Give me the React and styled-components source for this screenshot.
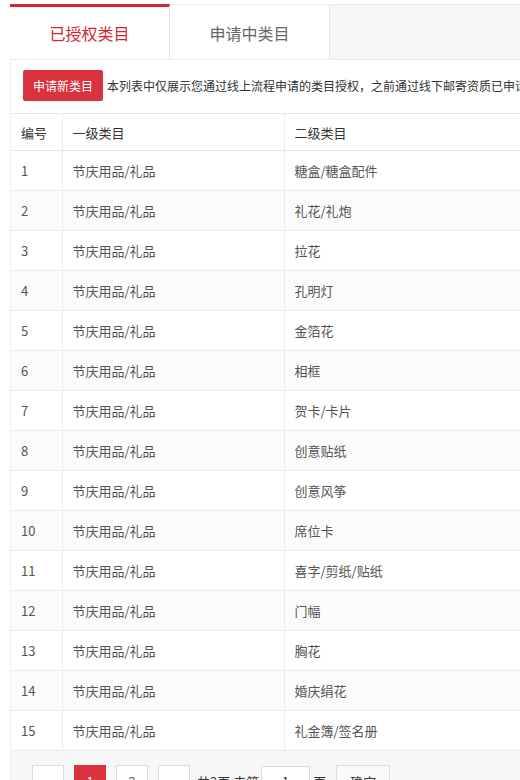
import React from "react";
import styled, { createGlobalStyle } from "styled-components";

const GlobalStyle = createGlobalStyle`
  html, body {
    margin: 0;
    padding: 0;
    background: #fff;
    overflow: hidden;
  }
  body {
    font-family: "Noto Sans CJK SC", "Noto Sans", sans-serif;
    color: #555;
  }
`;

const Page = styled.div`
  width: 760px;
  padding: 4px 0 0 10px;
`;

const TabBar = styled.div`
  display: flex;
  height: 56px;
  background: #f7f7f7;
  border-top: 1px solid #ececec;
  border-bottom: 1px solid #ececec;
  box-sizing: border-box;
`;

const Tab = styled.div`
  width: 160px;
  display: flex;
  align-items: center;
  justify-content: center;
  background: #fff;
  font-size: 16px;
  box-sizing: border-box;
  margin-top: ${(p) => (p.$active ? "-1px" : "0")};
  color: ${(p) => (p.$active ? "#d4262e" : "#666")};
  border-top: ${(p) => (p.$active ? "3px solid #d4262e" : "none")};
  border-right: 1px solid #e6e6e6;
  padding-top: ${(p) => (p.$active ? "0" : "2px")};
`;

const Panel = styled.div`
  border-left: 1px solid #eeeeee;
`;

const Toolbar = styled.div`
  display: flex;
  align-items: center;
  gap: 4px;
  padding: 10px 12px 12px;
  white-space: nowrap;
`;

const RedButton = styled.button`
  height: 31px;
  padding: 0 10px;
  border: none;
  border-radius: 2px;
  background: #d9333f;
  color: #fff;
  font-family: inherit;
  font-size: 12px;
`;

const Note = styled.span`
  font-size: 12px;
  color: #333;
`;

const Table = styled.table`
  border-collapse: collapse;
  width: 740px;
  font-size: 13px;
  table-layout: fixed;
`;

const Th = styled.th`
  height: 36px;
  text-align: left;
  font-weight: normal;
  color: #333;
  padding: 0 10px;
  border-top: 1px solid #e8e8e8;
  border-bottom: 1px solid #e8e8e8;
  & + & {
    border-left: 1px solid #ececec;
  }
`;

const Row = styled.tr`
  background: ${(p) => (p.$even ? "#fbfbfb" : "#fff")};
`;

const Td = styled.td`
  height: 39px;
  padding: 0 10px;
  color: #555;
  border-bottom: 1px solid #ececec;
  & + & {
    border-left: 1px solid #ececec;
  }
`;

const Pager = styled.div`
  display: flex;
  align-items: center;
  background: #f7f7f7;
  padding: 14px 21px 20px;
  font-size: 13px;
  color: #333;
`;

const PageBtn = styled.div`
  width: 32px;
  height: 32px;
  box-sizing: border-box;
  display: flex;
  align-items: center;
  justify-content: center;
  margin-right: 10px;
  border: 1px solid ${(p) => (p.$active ? "#d9333f" : "#dcdcdc")};
  background: ${(p) => (p.$active ? "#d9333f" : "#fff")};
  color: ${(p) => (p.$active ? "#fff" : p.$disabled ? "#bbb" : "#555")};
  font-size: 13px;
  &:nth-child(4) {
    margin-right: 7px;
  }
`;

const PagerText = styled.span`
  margin-right: 2px;
`;

const PageInput = styled.div`
  width: 49px;
  height: 30px;
  box-sizing: border-box;
  border: 1px solid #dcdcdc;
  background: #fff;
  display: flex;
  align-items: center;
  justify-content: center;
  margin-right: 3px;
`;

const ConfirmBtn = styled.div`
  width: 54px;
  height: 32px;
  box-sizing: border-box;
  margin-left: 10px;
  border: 1px solid #dcdcdc;
  background: #fafafa;
  display: flex;
  align-items: center;
  justify-content: center;
`;

const rows = [
  "糖盒/糖盒配件",
  "礼花/礼炮",
  "拉花",
  "孔明灯",
  "金箔花",
  "相框",
  "贺卡/卡片",
  "创意贴纸",
  "创意风筝",
  "席位卡",
  "喜字/剪纸/贴纸",
  "门幅",
  "胸花",
  "婚庆绢花",
  "礼金簿/签名册",
];

export default function App() {
  return (
    <>
      <GlobalStyle />
      <Page>
        <TabBar>
          <Tab $active>已授权类目</Tab>
          <Tab>申请中类目</Tab>
        </TabBar>
        <Panel>
          <Toolbar>
            <RedButton>申请新类目</RedButton>
            <Note>
              本列表中仅展示您通过线上流程申请的类目授权，之前通过线下邮寄资质已申请的类目不在此展示
            </Note>
          </Toolbar>
          <Table>
            <colgroup>
              <col style={{ width: 51 }} />
              <col style={{ width: 222 }} />
              <col />
            </colgroup>
            <thead>
              <tr>
                <Th>编号</Th>
                <Th>一级类目</Th>
                <Th>二级类目</Th>
              </tr>
            </thead>
            <tbody>
              {rows.map((name, i) => (
                <Row key={name} $even={i % 2 === 1}>
                  <Td>{i + 1}</Td>
                  <Td>节庆用品/礼品</Td>
                  <Td>{name}</Td>
                </Row>
              ))}
            </tbody>
          </Table>
          <Pager>
            <PageBtn $disabled>‹</PageBtn>
            <PageBtn $active>1</PageBtn>
            <PageBtn>2</PageBtn>
            <PageBtn>›</PageBtn>
            <PagerText>共2页 去第</PagerText>
            <PageInput>1</PageInput>
            <span>页</span>
            <ConfirmBtn>确定</ConfirmBtn>
          </Pager>
        </Panel>
      </Page>
    </>
  );
}
